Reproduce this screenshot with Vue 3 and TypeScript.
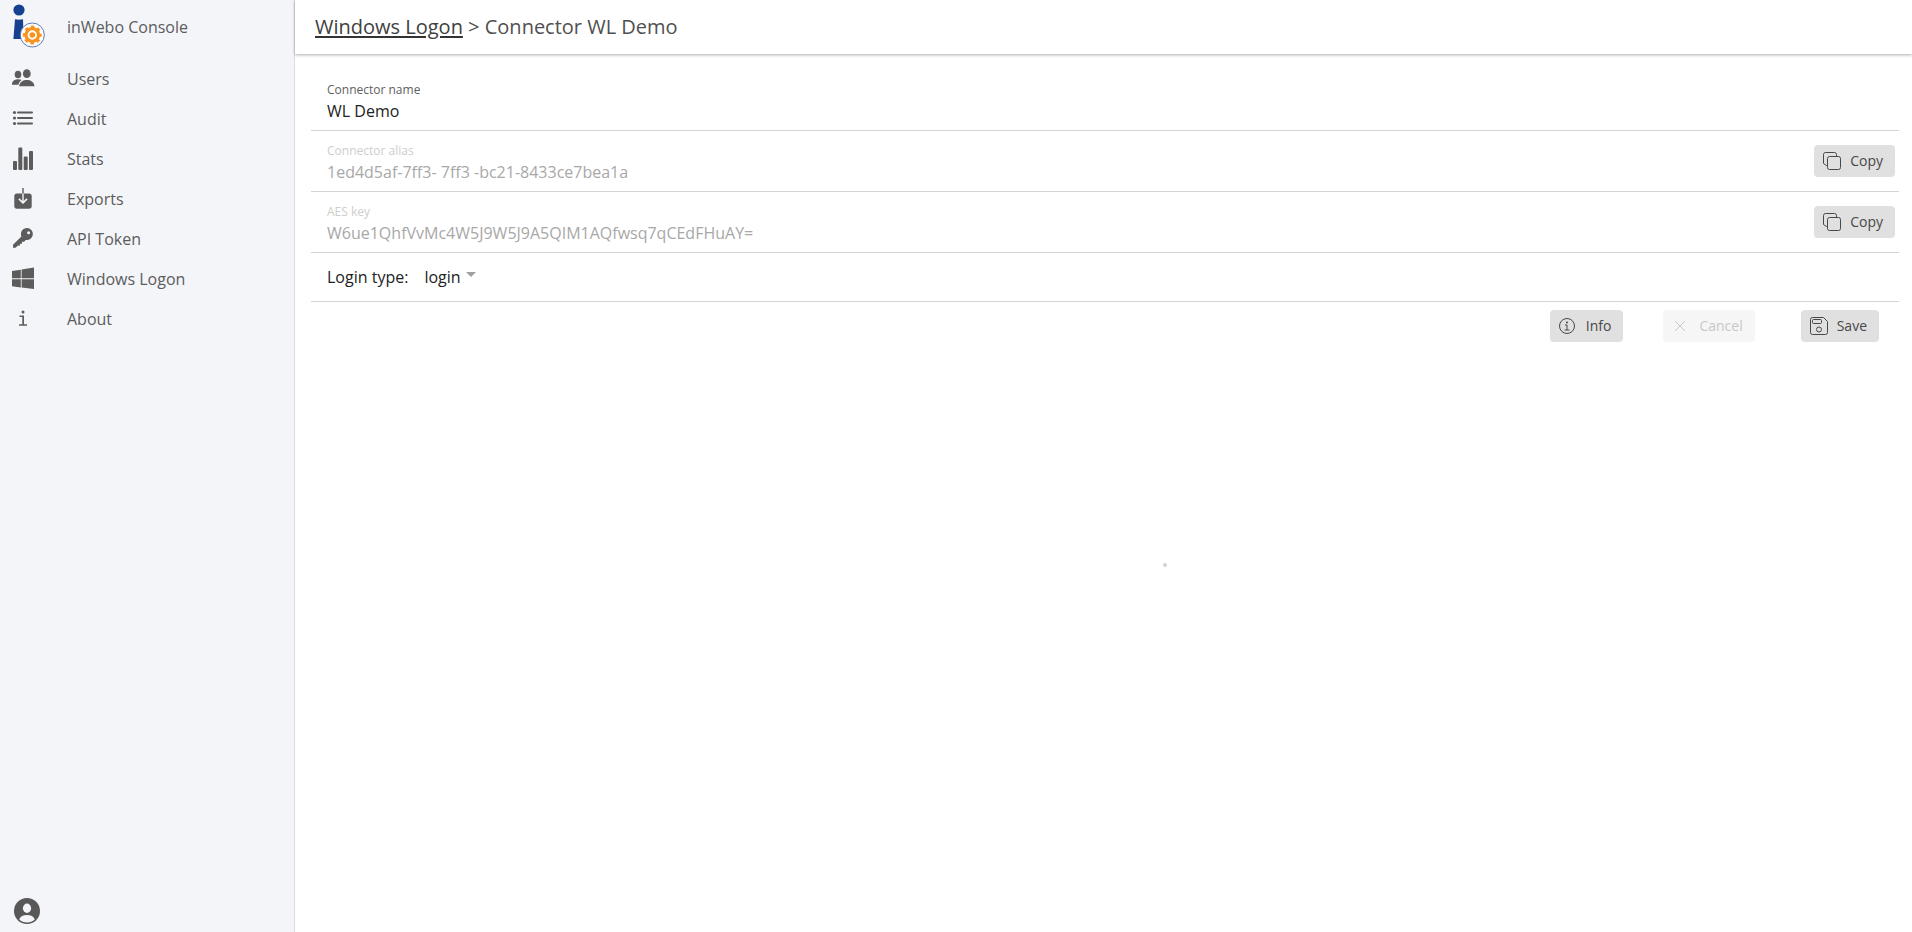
<script setup lang="ts">
import { ref } from 'vue'

interface MenuEntry {
  label: string
  icon: string
}

interface Field {
  id: string
  label: string
  value: string
  locked: boolean
}

const menu: MenuEntry[] = [
  { label: 'Users', icon: 'users' },
  { label: 'Audit', icon: 'audit' },
  { label: 'Stats', icon: 'stats' },
  { label: 'Exports', icon: 'exports' },
  { label: 'API Token', icon: 'key' },
  { label: 'Windows Logon', icon: 'windows' },
  { label: 'About', icon: 'about' },
]

const fields = ref<Field[]>([
  { id: 'name', label: 'Connector name', value: 'WL Demo', locked: false },
  { id: 'alias', label: 'Connector alias', value: '1ed4d5af-7ff3- 7ff3 -bc21-8433ce7bea1a', locked: true },
  { id: 'aes', label: 'AES key', value: 'W6ue1QhfVvMc4W5J9W5J9A5QIM1AQfwsq7qCEdFHuAY=', locked: true },
])

const loginType = ref('login')
</script>

<template>
  <div class="shell">
    <aside class="sidebar">
      <div class="brand">
        <svg class="logo" width="48" height="54" viewBox="0 0 48 54" aria-hidden="true">
          <circle cx="19" cy="10" r="5.6" fill="#16418f" />
          <path d="M15 19.3q4 .9 8 0L23.6 39H13.4z" fill="#16418f" />
          <circle cx="32.3" cy="35" r="12" fill="#fff" stroke="#4b6aa9" stroke-width="0.9" />
          <circle cx="32.3" cy="35" r="8.2" fill="none" stroke="#f7931e" stroke-width="2.6" stroke-dasharray="3.4 3.04" stroke-dashoffset="1.7" />
          <circle cx="32.3" cy="35" r="6.3" fill="none" stroke="#f7931e" stroke-width="3.2" />
          <circle cx="32.3" cy="35" r="2.8" fill="#f7931e" />
        </svg>
        <span>inWebo Console</span>
      </div>
      <nav class="menu">
        <a v-for="entry in menu" :key="entry.label" href="#" class="menu-item">
          <svg class="menu-icon" width="24" height="24" viewBox="0 0 24 24" fill="currentColor" aria-hidden="true">
            <g v-if="entry.icon === 'users'">
              <ellipse cx="7" cy="7.500" rx="3.300" ry="3.800" />
              <ellipse cx="15.800" cy="6.700" rx="3.900" ry="4.400" />
              <path d="M1 17.800v-1.600c.6-2.700 3.200-4 6-4 1.500 0 2.800.3 3.800.9-1.600 1-2.800 2.400-3.200 4.200v.5z" />
              <path d="M8.300 19.300v-1c.6-3.500 3.700-5.400 7.500-5.400s6.900 1.900 7.500 5.400v1z" />
            </g>
            <g v-else-if="entry.icon === 'audit'">
              <circle cx="3.500" cy="5.500" r="1.600" />
              <circle cx="3.500" cy="11" r="1.600" />
              <circle cx="3.500" cy="16.500" r="1.600" />
              <rect x="6" y="4.500" width="16" height="2" rx="1" />
              <rect x="6" y="10" width="16" height="2" rx="1" />
              <rect x="6" y="15.500" width="16" height="2" rx="1" />
            </g>
            <g v-else-if="entry.icon === 'stats'">
              <rect x="2" y="14" width="4" height="9" rx="1" />
              <rect x="7.300" y="0.500" width="4" height="22.500" rx="1" />
              <rect x="12.700" y="9.500" width="4" height="13.500" rx="1" />
              <rect x="18" y="4" width="4" height="19" rx="1" />
            </g>
            <g v-else-if="entry.icon === 'exports'">
              <path d="M6 6.500h5.300V14L8.500 11.200 7.400 12.400 12 17l4.600-4.600-1.100-1.200L12.700 14V6.500H18a2.700 2.700 0 0 1 2.700 2.700V19a2.700 2.700 0 0 1-2.700 2.700H6A2.700 2.700 0 0 1 3.300 19V9.200A2.700 2.700 0 0 1 6 6.500z" />
              <rect x="11.300" y="1" width="1.400" height="5.500" />
            </g>
            <g v-else-if="entry.icon === 'key'">
              <path fill-rule="evenodd" d="M16 1a6 6 0 1 1-1.200 11.900L13 14.700h-2v2H9v1.900H7L4.500 20.700H2v-2.900l8.400-8.400A6 6 0 0 1 16 1zm1.600 3.300a1.500 1.500 0 1 0 0 3 1.500 1.500 0 0 0 0-3z" />
            </g>
            <g v-else-if="entry.icon === 'windows'">
              <path d="M1 4l8.800-1.300v8.600H1zM10.600 2.500L23 .6v10.700H10.600zM1 12.200h8.800v8.300L1 19.200zM10.600 12.200H23v9.900l-12.400-1.600z" />
            </g>
            <g v-else>
              <circle cx="12" cy="5" r="1.500" />
              <path d="M8.500 8.600h4.500v8.700h3v1.500H8v-1.500h3.300V10H8.500z" />
            </g>
          </svg>
          <span>{{ entry.label }}</span>
        </a>
      </nav>
      <button class="account" type="button" aria-label="Account">
        <svg width="26" height="26" viewBox="0 0 26 26" aria-hidden="true">
          <circle cx="13" cy="13" r="13" fill="#585858" />
          <ellipse cx="13" cy="10.300" rx="4.100" ry="4.700" fill="#f4f5f9" />
          <path d="M5.200 21.400c1-2.900 4-4.400 7.800-4.400s6.800 1.500 7.800 4.400C18.800 23.300 16 24.400 13 24.400s-5.800-1.100-7.800-3z" fill="#f4f5f9" />
        </svg>
      </button>
    </aside>

    <main class="main">
      <header class="header">
        <h1 class="title"><a href="#">Windows Logon</a> &gt; Connector WL Demo</h1>
      </header>

      <form class="form" @submit.prevent>
        <div v-for="field in fields" :key="field.id" class="row" :class="{ locked: field.locked }">
          <div class="field">
            <label :for="field.id">{{ field.label }}</label>
            <input :id="field.id" v-model="field.value" type="text" :disabled="field.locked" />
          </div>
          <button v-if="field.locked" type="button" class="btn copy">
            <svg width="20" height="20" viewBox="0 0 20 20" fill="none" stroke="currentColor" aria-hidden="true">
              <rect x="5.500" y="5.500" width="13" height="13" rx="2" />
              <path d="M5.500 14.500H4.500L1.500 12.500V3.500a2 2 0 0 1 2-2h9a2 2 0 0 1 2 2v2" />
            </svg>
            <span>Copy</span>
          </button>
        </div>
        <div class="row login">
          <label for="login-type">Login type:</label>
          <div class="select">
            <select id="login-type" v-model="loginType">
              <option value="login">login</option>
            </select>
            <svg width="10" height="5" viewBox="0 0 10 5" aria-hidden="true"><path d="M0 0h10L5 5z" fill="#a0a0a0" /></svg>
          </div>
        </div>
        <div class="actions">
          <button type="button" class="btn info">
            <svg width="18" height="18" viewBox="0 0 18 18" fill="none" stroke="currentColor" aria-hidden="true">
              <circle cx="9" cy="9" r="7.500" />
              <circle cx="9" cy="5.500" r="1" fill="currentColor" stroke="none" />
              <path d="M7 8h2v5M6.500 13h5" />
            </svg>
            <span>Info</span>
          </button>
          <button type="button" class="btn cancel" disabled>
            <svg width="18" height="18" viewBox="0 0 18 18" fill="none" stroke="currentColor" aria-hidden="true">
              <path d="M4 4l10 10M14 4L4 14" />
            </svg>
            <span>Cancel</span>
          </button>
          <button type="submit" class="btn save">
            <svg width="20" height="20" viewBox="0 0 20 20" fill="none" stroke="currentColor" aria-hidden="true">
              <path d="M3.500 1.500h11L18.500 5.500v11a2 2 0 0 1-2 2h-13a2 2 0 0 1-2-2v-13a2 2 0 0 1 2-2z" />
              <rect x="3.500" y="3.500" width="9" height="4" rx="1" />
              <circle cx="10" cy="13.500" r="2.500" />
            </svg>
            <span>Save</span>
          </button>
        </div>
      </form>
      <span class="spinner"></span>
    </main>
  </div>
</template>

<style>
body {
  margin: 0;
}
</style>

<style scoped>
.shell {
  display: flex;
  min-height: 100vh;
  font-family: "Open Sans", "Noto Sans", sans-serif;
  font-size: 16px;
  font-weight: 400;
  color: #5c5c5c;
}

.sidebar {
  box-sizing: border-box;
  flex: 0 0 295px;
  display: flex;
  flex-direction: column;
  background: #f4f5f9;
  border-right: 1px solid #dcdcdc;
}

.brand {
  display: flex;
  align-items: center;
  gap: 19px;
  height: 54px;
}

.menu {
  display: flex;
  flex-direction: column;
  padding-top: 5px;
}

.menu-item {
  display: flex;
  align-items: center;
  gap: 32px;
  height: 40px;
  padding-left: 11px;
  color: inherit;
  text-decoration: none;
}

.menu-icon {
  flex: none;
}

.account {
  display: flex;
  margin: auto 0 8px 14px;
  width: 26px;
  padding: 0;
  border: 0;
  background: none;
}

.main {
  position: relative;
  flex: 1;
  min-width: 0;
  background: #fff;
}

.header {
  display: flex;
  align-items: center;
  height: 54px;
  padding: 0 20px;
  box-shadow: 0 1px 3px rgba(0, 0, 0, 0.32);
}

.title {
  margin: 0;
  font-size: 20px;
  font-weight: 400;
  line-height: 28px;
  color: #505050;
}

.title a {
  color: #404040;
  text-decoration-color: #333;
  text-decoration-thickness: 2px;
  text-underline-offset: 2px;
}

.form {
  padding: 16px 13px 0 16px;
}

.row {
  box-sizing: border-box;
  display: flex;
  align-items: center;
  height: 61px;
  padding: 0 4px 0 16px;
  border-bottom: 1px solid #d3d3d3;
}

.field {
  display: flex;
  flex: 1;
  flex-direction: column;
  padding-top: 4px;
}

.field label {
  font-size: 12px;
  line-height: 18px;
  color: #606060;
}

.field input {
  height: 24px;
  padding: 0;
  border: 0;
  background: none;
  font: inherit;
  color: #222;
}

.locked .field label {
  color: #cdcdcd;
}

.locked .field input {
  color: #a8a8a8;
}

.login {
  height: 49px;
  gap: 16px;
  color: #222;
}

.select {
  display: flex;
  align-items: center;
  gap: 5px;
}

.select select {
  appearance: none;
  padding: 0;
  border: 0;
  background: none;
  font: inherit;
  color: #222;
}

.select svg {
  margin-bottom: 6px;
}

.actions {
  display: flex;
  justify-content: flex-end;
  padding: 8px 20px 0 0;
}

.btn {
  display: flex;
  align-items: center;
  gap: 8px;
  height: 32px;
  padding: 0 12px 0 8px;
  border: 0;
  border-radius: 4px;
  background: #e0e0e0;
  font: inherit;
  font-size: 14px;
  line-height: 20px;
  color: #484848;
}

.btn span {
  padding-bottom: 1px;
}

.info {
  gap: 10px;
  margin-right: 40px;
}

.cancel {
  gap: 10px;
  margin-right: 46px;
  background: #f6f6f6;
  color: #c8c8c8;
}

.spinner {
  position: absolute;
  left: 53.7%;
  top: 60.4%;
  width: 4px;
  height: 4px;
  border-radius: 2px;
  background: #d3d3d3;
}
</style>
